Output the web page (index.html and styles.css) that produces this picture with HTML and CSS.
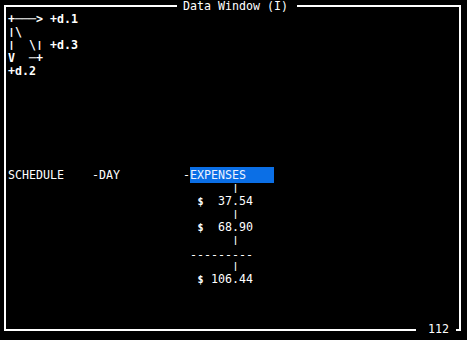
FILE: index.html
```html
<!DOCTYPE html>
<html>
<head>
<meta charset="utf-8">
<link rel="stylesheet" href="styles.css">
</head>
<body>
<div class="window">
  <span class="title">Data Window (I)</span>
  <div class="screen">
    <div class="row bold">+───&gt; +d.1</div>
    <div class="row bold"><span class="bar">|</span>\</div>
    <div class="row bold"><span class="bar">|</span>  \<span class="bar">|</span> +d.3</div>
    <div class="row bold">V  ─+</div>
    <div class="row bold">+d.2</div>
    <div class="row"></div>
    <div class="row"></div>
    <div class="row"></div>
    <div class="row"></div>
    <div class="row"></div>
    <div class="row"></div>
    <div class="row"></div>
    <div class="row">SCHEDULE    -DAY         -<span class="sel">EXPENSES    </span></div>
    <div class="row">                                <span class="bar">|</span></div>
    <div class="row">                           <span class="cur">$</span>  37.54</div>
    <div class="row">                                <span class="bar">|</span></div>
    <div class="row">                           <span class="cur">$</span>  68.90</div>
    <div class="row">                                <span class="bar">|</span></div>
    <div class="row">                          <span class="low">---------</span></div>
    <div class="row">                                <span class="bar">|</span></div>
    <div class="row">                           <span class="cur">$</span> 106.44</div>
  </div>
  <span class="page">112</span>
</div>
</body>
</html>
```

FILE: styles.css
```css
html, body {
  margin: 0;
  padding: 0;
  background: #000;
  width: 467px;
  height: 340px;
  overflow: hidden;
}
body {
  font-family: "DejaVu Sans Mono", "Liberation Mono", monospace;
  font-size: 11.63px;
  color: #fff;
}
.window {
  position: relative;
  margin: 5px 0 0 4px;
  width: 457px;
  height: 326px;
  box-sizing: border-box;
  border: 2px solid #fff;
  padding: 6px 0 0 2px;
}
.title {
  position: absolute;
  top: -7px;
  left: 171px;
  padding: 0 9px 0 6px;
  background: #000;
  line-height: 13px;
  white-space: pre;
}
.page {
  position: absolute;
  bottom: -7px;
  right: 3px;
  padding: 0 7px 0 12px;
  background: #000;
  line-height: 13px;
}
.screen {
  display: grid;
  grid-auto-rows: 13px;
}
.row {
  white-space: pre;
  line-height: 13px;
}
.bold {
  font-weight: bold;
}
.sel {
  background: #0b6fe6;
  color: #eef4ff;
  padding: 1px 0;
}
.low {
  position: relative;
  top: 2px;
}
.bar {
  display: inline-block;
  line-height: 10px;
  transform: scaleY(0.72);
  transform-origin: 50% 40%;
}
.cur {
  display: inline-block;
  font-size: 10px;
  font-weight: bold;
  width: 7px;
  text-align: center;
}
```
